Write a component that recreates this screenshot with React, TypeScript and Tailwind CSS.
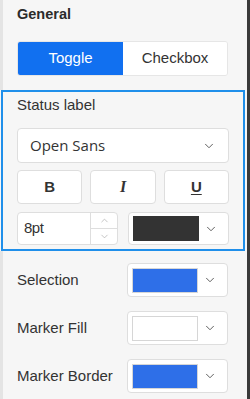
import { ChevronDown, ChevronUp } from "lucide-react";

function ColorSelect({ color }: { color: string }) {
    return (
        <div className="flex h-[34px] w-[101px] items-center rounded-[4px] border border-[#dedede] bg-white pl-[4px] pr-[10px]">
            <div className={`h-[25px] w-[66px] border border-[#d6d6d6] ${color}`} />
            <ChevronDown className="ml-auto h-[14px] w-[14px] text-[#555]" strokeWidth={1.6} />
        </div>
    );
}

function ColorRow({ label, color }: { label: string; color: string }) {
    return (
        <div className="flex h-[34px] items-center justify-between">
            <span className="text-[15px] text-[#333]">{label}</span>
            <ColorSelect color={color} />
        </div>
    );
}

export default function App() {
    return (
        <div className="flex h-[399px] w-[250px] overflow-hidden bg-[#f6f6f6] font-['Liberation_Sans',Arial,sans-serif]">
            <div className="flex w-[247px] flex-col">
                {/* general */}
                <div className="border-l-[3px] border-[#e4e4e4] pl-[14px] pr-[19px] pt-[4px] pb-[14px]">
                    <div className="h-[20px] text-[14.5px] font-bold leading-[20px] text-[#2b2b2b]">General</div>
                    <div className="mt-[17px] flex h-[35px] overflow-hidden rounded-[3px] border border-[#e6e6e6] text-[15px]">
                        <div className="flex w-[105px] items-center justify-center bg-[#1170f0] text-white">Toggle</div>
                        <div className="flex flex-1 items-center justify-center bg-white text-[#333]">Checkbox</div>
                    </div>
                </div>

                {/* status label */}
                <div className="ml-[1px] w-[244px] border-2 border-[#1f8fea] pl-[14px] pr-[14px] pt-[3px] pb-[4px]">
                    <div className="h-[20px] text-[15px] leading-[20px] text-[#333]">Status label</div>
                    <div className="mt-[13px] flex h-[35px] items-center rounded-[4px] border border-[#dedede] bg-white pl-[12px] pr-[12px]">
                        <span className="font-['Open_Sans',sans-serif] text-[15px] text-[#333]">Open Sans</span>
                        <ChevronDown className="ml-auto h-[14px] w-[14px] text-[#555]" strokeWidth={1.6} />
                    </div>
                    <div className="mt-[7px] grid h-[34px] grid-cols-3 gap-[8px]">
                        <div className="flex items-center justify-center rounded-[4px] border border-[#dedede] bg-white text-[15px] font-extrabold text-[#333]">B</div>
                        <div className="flex items-center justify-center rounded-[4px] border border-[#dedede] bg-white font-['Liberation_Serif',serif] text-[16px] font-bold italic text-[#333]">I</div>
                        <div className="flex items-center justify-center rounded-[4px] border border-[#dedede] bg-white text-[15px] font-bold text-[#333] underline underline-offset-2">U</div>
                    </div>
                    <div className="mt-[8px] flex h-[33px] justify-between">
                        <div className="flex w-[101px] rounded-[4px] border border-[#dedede] bg-white">
                            <div className="flex flex-1 items-center pl-[6px] text-[15px] tracking-[-0.5px] text-[#333]">8pt</div>
                            <div className="flex w-[27px] flex-col border-l border-[#dedede]">
                                <div className="flex flex-1 items-center justify-center border-b border-[#dedede]">
                                    <ChevronUp className="h-[11px] w-[11px] text-[#aaa]" strokeWidth={1.5} />
                                </div>
                                <div className="flex flex-1 items-center justify-center">
                                    <ChevronDown className="h-[11px] w-[11px] text-[#aaa]" strokeWidth={1.5} />
                                </div>
                            </div>
                        </div>
                        <div className="flex h-[33px] w-[101px] items-center rounded-[4px] border border-[#dedede] bg-white pl-[4px] pr-[10px]">
                            <div className="h-[25px] w-[66px] bg-[#333333]" />
                            <ChevronDown className="ml-auto h-[14px] w-[14px] text-[#555]" strokeWidth={1.6} />
                        </div>
                    </div>
                </div>

                {/* colours */}
                <div className="flex flex-1 flex-col gap-[14px] border-l-[3px] border-[#e4e4e4] pl-[14px] pr-[19px] pt-[12px]">
                    <ColorRow label="Selection" color="bg-[#2e6fe8]" />
                    <ColorRow label="Marker Fill" color="bg-white" />
                    <ColorRow label="Marker Border" color="bg-[#2e6fe8]" />
                </div>
            </div>
            <div className="w-[3px] bg-[#3a3a3a]" />
        </div>
    );
}
